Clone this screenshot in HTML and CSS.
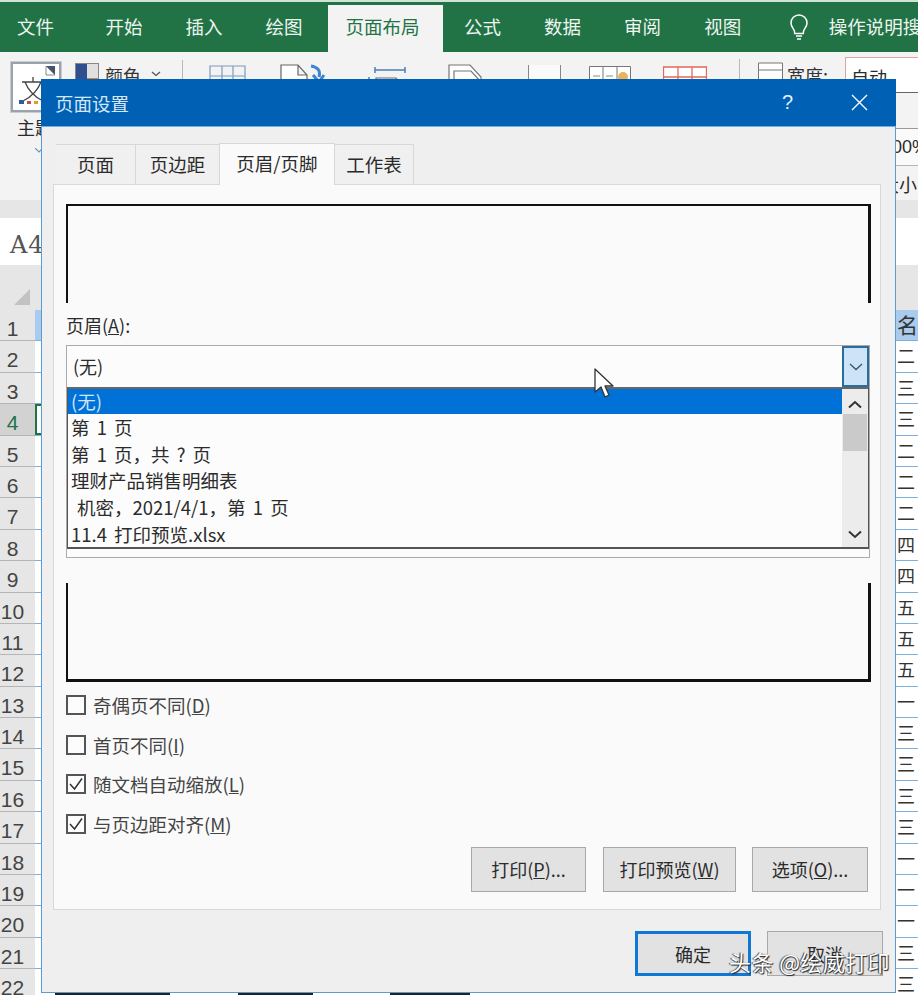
FILE: index.html
```html
<!DOCTYPE html>
<html lang="zh-CN">
<head>
<meta charset="utf-8">
<title>页面设置</title>
<link rel="stylesheet" href="styles.css">
</head>
<body>
<div class="app">
  <nav class="tabs">
    <span class="tab tab-file">文件</span>
    <span class="tab">开始</span>
    <span class="tab">插入</span>
    <span class="tab">绘图</span>
    <span class="tab tab-active">页面布局</span>
    <span class="tab">公式</span>
    <span class="tab">数据</span>
    <span class="tab">审阅</span>
    <span class="tab">视图</span>
    <svg class="bulb" width="20" height="28" viewBox="0 0 20 28"><path d="M10 2a8 8 0 0 0-8 8c0 3.500 2.200 5 3.200 7.500.4 1 .5 2 .5 3h8.600c0-1 .1-2 .5-3C15.800 15 18 13.500 18 10a8 8 0 0 0-8-8zM7 23h6M8 26h4" fill="none" stroke="#fff" stroke-width="1.500"/></svg>
    <span class="tell">操作说明搜索</span>
  </nav>

  <section class="toolbar">
    <div class="tb-row">
      <div class="theme-btn">
        <svg width="44" height="44" viewBox="0 0 44 44"><path d="M33 2l9 9v-9z" fill="#44566f"/><path d="M33 2l9 9h-9z" fill="#fff" stroke="#888"/><path d="M9 18h22M20 13v5M12 18c3 8 8 14 18 19M28 18c-3 8-8 14-18 19" fill="none" stroke="#444" stroke-width="1.300"/><rect x="6" y="36" width="5" height="4" fill="#2b5c9e"/><rect x="14" y="37" width="4" height="3" fill="#c0504d"/><rect x="21" y="37" width="4" height="3" fill="#e39c2a"/><rect x="28" y="37" width="4" height="3" fill="#555"/></svg>
      </div>
      <svg class="swatch" width="24" height="28" viewBox="0 0 24 28"><rect x=".5" y=".5" width="23" height="27" fill="#fff" stroke="#888"/><rect x="1" y="1" width="11" height="26" fill="#2f4f8f"/><rect x="12" y="1" width="11" height="14" fill="#e0e0e0"/><rect x="12" y="15" width="11" height="12" fill="#ed7d31"/></svg>
      <span class="tb-label">颜色</span>
      <svg class="caret" width="10" height="6" viewBox="0 0 10 6"><path d="M1 1l4 3.500L9 1" fill="none" stroke="#555" stroke-width="1.300"/></svg>
      <span class="sep sep-a"></span>
      <svg class="ic ic-table" width="38" height="30" viewBox="0 0 38 30"><path d="M1 30V1h35v29M1 11h35M13 1v29M24 1v29" fill="none" stroke="#7d9cc0" stroke-width="1.200"/></svg>
      <svg class="ic ic-page" width="46" height="30" viewBox="0 0 46 30"><path d="M1 30V1h17l9 10v19M18 1v10h9" fill="#fff" stroke="#666" stroke-width="1.200"/><path d="M31 2c6 1 10 4 8 11M33 11l6 7 5-7" fill="none" stroke="#3f84cc" stroke-width="3"/></svg>
      <svg class="ic ic-margin" width="38" height="30" viewBox="0 0 38 30"><path d="M7 5h30M7 2v6M37 2v6M1 12v18" fill="none" stroke="#4e80b5" stroke-width="1.500"/><path d="M8 30V13h20l7 8v9" fill="#fff" stroke="#666" stroke-width="1.200"/></svg>
      <svg class="ic ic-page2" width="34" height="30" viewBox="0 0 34 30"><path d="M1 30V1h21l11 12v17M6 30V7h17l10 11" fill="#fff" stroke="#777" stroke-width="1.200"/></svg>
      <span class="blank-box"></span>
      <svg class="ic ic-bg" width="42" height="30" viewBox="0 0 42 30"><path d="M.5 30V.5h41V30M14 .5V30M28 .5V30" fill="#fff" stroke="#777"/><path d="M4 10h7M17 10h7" stroke="#888"/><circle cx="34" cy="11" r="5" fill="#eab35a"/></svg>
      <svg class="ic ic-red" width="44" height="30" viewBox="0 0 44 30"><path d="M.5 30V1h43v29M.500 11h43M15 1v29M29 1v29" fill="#fff" stroke="#e0685a" stroke-width="1.300"/></svg>
      <span class="sep sep-b"></span>
      <svg class="ic ic-width" width="25" height="30" viewBox="0 0 25 30"><path d="M.5 1h24v28H.5zM.5 8h24" fill="#fff" stroke="#777"/></svg>
      <span class="tb-label tb-width">宽度:</span>
      <span class="auto-box">自动</span>
    </div>
    <div class="tb-side">
      <span class="side-cell side-pct">00%</span>
      <span class="side-cell side-size">大小</span>
    </div>
    <span class="theme-label">主题</span>
    <svg class="theme-caret" width="8" height="5" viewBox="0 0 8 5"><path d="M0 0l4 4 4-4" fill="none" stroke="#6f93b5" stroke-width="1.200"/></svg>
  </section>

  <div class="band"></div>
  <div class="formula"><span class="cellref">A4</span></div>
  <div class="colhead"><span class="corner"></span></div>

  <div class="rows">
    <div class="row"><span class="rh">1</span><span class="rc rc-blue"></span><span class="rv rv-blue">名</span></div>
    <div class="row"><span class="rh">2</span><span class="rc"></span><span class="rv">二</span></div>
    <div class="row"><span class="rh">3</span><span class="rc"></span><span class="rv">三</span></div>
    <div class="row row-sel"><span class="rh">4</span><span class="rc"></span><span class="rv">三</span></div>
    <div class="row"><span class="rh">5</span><span class="rc"></span><span class="rv">二</span></div>
    <div class="row"><span class="rh">6</span><span class="rc"></span><span class="rv">二</span></div>
    <div class="row"><span class="rh">7</span><span class="rc"></span><span class="rv">二</span></div>
    <div class="row"><span class="rh">8</span><span class="rc"></span><span class="rv">四</span></div>
    <div class="row"><span class="rh">9</span><span class="rc"></span><span class="rv">四</span></div>
    <div class="row"><span class="rh">10</span><span class="rc"></span><span class="rv">五</span></div>
    <div class="row"><span class="rh">11</span><span class="rc"></span><span class="rv">五</span></div>
    <div class="row"><span class="rh">12</span><span class="rc"></span><span class="rv">五</span></div>
    <div class="row"><span class="rh">13</span><span class="rc"></span><span class="rv">一</span></div>
    <div class="row"><span class="rh">14</span><span class="rc"></span><span class="rv">三</span></div>
    <div class="row"><span class="rh">15</span><span class="rc"></span><span class="rv">三</span></div>
    <div class="row"><span class="rh">16</span><span class="rc"></span><span class="rv">三</span></div>
    <div class="row"><span class="rh">17</span><span class="rc"></span><span class="rv">三</span></div>
    <div class="row"><span class="rh">18</span><span class="rc"></span><span class="rv">一</span></div>
    <div class="row"><span class="rh">19</span><span class="rc"></span><span class="rv">一</span></div>
    <div class="row"><span class="rh">20</span><span class="rc"></span><span class="rv">一</span></div>
    <div class="row"><span class="rh">21</span><span class="rc"></span><span class="rv">三</span></div>
    <div class="row"><span class="rh">22</span><span class="rc"></span><span class="rv">三</span></div>
  </div>
</div>

<div class="peek"><span class="peek-a"></span><span class="peek-b"></span><span class="peek-c"></span></div>

<div class="dialog">
  <header class="d-title">
    <span class="d-name">页面设置</span>
    <span class="d-help">?</span>
    <svg class="d-close" width="17" height="17" viewBox="0 0 17 17"><path d="M1 1l15 15M16 1L1 16" stroke="#fff" stroke-width="1.400" fill="none"/></svg>
  </header>
  <div class="d-tabs">
    <span class="d-tab d-tab1">页面</span>
    <span class="d-tab d-tab2">页边距</span>
    <span class="d-tab d-tab3">页眉/页脚</span>
    <span class="d-tab d-tab4">工作表</span>
  </div>
  <div class="panel">
    <div class="preview preview-top"></div>
    <label class="field-label">页眉(<u>A</u>):</label>
    <div class="combo">
      <span class="combo-val">(无)</span>
      <span class="combo-btn"><svg width="14" height="8" viewBox="0 0 14 8"><path d="M1 1l6 5.500L13 1" fill="none" stroke="#33566f" stroke-width="1.300"/></svg></span>
      <div class="dropdown">
        <ul class="list">
          <li class="sel">(无)</li>
          <li>第 1 页</li>
          <li>第 1 页，共 ? 页</li>
          <li>理财产品销售明细表</li>
          <li class="ind">机密，2021/4/1，第 1 页</li>
          <li>11.4 打印预览.xlsx</li>
        </ul>
        <div class="scroll">
          <svg class="sc-up" width="14" height="9" viewBox="0 0 14 9"><path d="M1 7.500l6-5.500 6 5.500" fill="none" stroke="#333" stroke-width="2"/></svg>
          <span class="thumb"></span>
          <svg class="sc-down" width="14" height="9" viewBox="0 0 14 9"><path d="M1 1.500L7 7l6-5.500" fill="none" stroke="#333" stroke-width="2"/></svg>
        </div>
      </div>
    </div>
    <div class="preview preview-bot"></div>
    <div class="checks">
      <div class="check"><span class="box"></span><span>奇偶页不同(<u>D</u>)</span></div>
      <div class="check"><span class="box"></span><span>首页不同(<u>I</u>)</span></div>
      <div class="check"><span class="box"><svg width="16" height="14" viewBox="0 0 16 14"><path d="M2 7l4.500 5L14 1.500" fill="none" stroke="#333" stroke-width="1.500"/></svg></span><span>随文档自动缩放(<u>L</u>)</span></div>
      <div class="check"><span class="box"><svg width="16" height="14" viewBox="0 0 16 14"><path d="M2 7l4.500 5L14 1.500" fill="none" stroke="#333" stroke-width="1.500"/></svg></span><span>与页边距对齐(<u>M</u>)</span></div>
    </div>
    <div class="panel-btns">
      <span class="btn btn-print">打印(<u>P</u>)...</span>
      <span class="btn btn-prev">打印预览(<u>W</u>)</span>
      <span class="btn btn-opt">选项(<u>O</u>)...</span>
    </div>
  </div>
  <footer class="d-foot">
    <span class="btn btn-ok">确定</span>
    <span class="btn btn-cancel">取消</span>
  </footer>
</div>

<svg class="cursor" width="20" height="31" viewBox="0 0 20 31"><path d="M1 1v23l6-5 4 10 4-2-4-9h8z" fill="#fff" stroke="#333" stroke-width="1.300" stroke-linejoin="round"/></svg>
<span class="watermark">头条 @绘威打印</span>
</body>
</html>
```
FILE: styles.css
```css
* { box-sizing: border-box; }
html, body { margin: 0; padding: 0; }
body {
  width: 918px;
  height: 998px;
  overflow: hidden;
  position: relative;
  background: #fff;
  font-family: "Noto Sans CJK SC", "Liberation Sans", sans-serif;
  color: #2b2b2b;
}
.app { height: 995px; overflow: hidden; display: flex; flex-direction: column; }

/* ribbon tabs */
.tabs {
  flex: none;
  height: 52px;
  background: #217346;
  border-top: 2px solid #cfe3d6;
  display: flex;
  align-items: stretch;
  color: #eef5f0;
  font-size: 18.500px;
  padding-left: 17px;
}
.tab { padding: 0 21.500px; line-height: 48px; white-space: nowrap; }
.tab-file { padding: 0 30px 0 0; }
.tab-active {
  background: #f3f3f3;
  color: #217346;
  margin: 3px 0 0 3.500px;
  line-height: 42px;
  padding: 0 23px 0 18px;
}
.bulb { margin: 11px 0 0 26px; flex: none; }
.tell { margin-left: 20px; line-height: 48px; white-space: nowrap; }

/* ribbon body */
.toolbar {
  flex: none;
  height: 148px;
  background: #f3f3f3;
  position: relative;
  overflow: hidden;
}
.tb-row { display: flex; align-items: flex-start; height: 40px; padding: 10px 0 0 11px; }
.theme-btn {
  flex: none;
  width: 50px;
  height: 50px;
  background: #fff;
  border: 2px solid #9aa3ad;
  outline: 1px solid #c8cdd3;
}
.theme-btn svg { display: block; }
.swatch { margin: 1px 0 0 14px; flex: none; }
.tb-label { font-size: 18px; line-height: 26px; margin: 0 0 0 6px; color: #333; white-space: nowrap; }
.caret { margin: 9px 0 0 10px; flex: none; }
.sep { flex: none; width: 1px; height: 40px; background: #b8b8b8; }
.sep-a { margin-left: 21px; margin-top: -2px; }
.ic { flex: none; margin-top: 3px; }
.ic-table { margin-left: 26px; }
.ic-page { margin-left: 33px; margin-top: 2px; }
.ic-margin { margin-left: 42px; margin-top: 3px; }
.ic-page2 { margin-left: 42px; margin-top: 2px; }
.blank-box {
  flex: none;
  width: 33px;
  height: 40px;
  margin: 3px 0 0 46px;
  background: #fafafa;
  border-left: 1px solid #888;
  border-right: 1px solid #888;
}
.ic-bg { margin-left: 28px; margin-top: 4px; }
.ic-red { margin-left: 32px; margin-top: 4px; }
.sep-b { margin-left: 32px; margin-top: -3px; }
.ic-width { margin-left: 18px; margin-top: 0; }
.tb-width { margin-left: 4px; }
.auto-box {
  flex: none;
  width: 80px;
  height: 36px;
  margin: -5px 0 0 17px;
  background: #fff;
  border: 1px solid #d9a79f;
  border-bottom-color: #666;
  font-size: 18px;
  line-height: 38px;
  padding-left: 5px;
  white-space: nowrap;
}
.tb-side { position: absolute; left: 895px; top: 40px; width: 23px; }
.side-cell { display: block; height: 38px; overflow: hidden; white-space: nowrap; font-size: 18px; line-height: 36px; border-bottom: 1px solid #b5b5b5; }
.side-pct { margin-top: 36px; text-indent: -3px; font-family: "Liberation Sans", sans-serif; border-top: 1px solid #999; background: #fafafa; }
.side-size { text-indent: -14px; border: 0; }
.theme-label { position: absolute; left: 17px; top: 62px; font-size: 18px; line-height: 26px; }
.theme-caret { position: absolute; left: 35px; top: 96px; }

.band { flex: none; height: 18px; background: #e6e6e6; }
.formula { flex: none; height: 47px; background: #fff; padding-left: 10px; }
.cellref { font: 24px/54px "DejaVu Serif", serif; color: #555; letter-spacing: 1px; }
.colhead { flex: none; height: 45px; background: #e6e6e6; position: relative; }
.corner {
  display: block;
  width: 0;
  height: 16px;
  margin-left: 14px;
  border-left: 16px solid transparent;
  border-bottom: 16px solid #c2c2c2;
  position: relative;
  top: 24px;
}

/* sheet rows */
.rows { flex: 1; display: flex; flex-direction: column; }
.row {
  flex: none;
  height: 31.400px;
  display: grid;
  grid-template-columns: 35px 1fr 23px;
  border-bottom: 1px solid #7fb0dc;
}
.rh {
  background: #e6e6e6;
  text-align: center;
  padding-right: 10px;
  font: 21px/38px "Liberation Sans", sans-serif;
  color: #444;
  white-space: nowrap;
  overflow: hidden;
  box-shadow: 0 1px 0 #b5b5b5;
}
.row-sel .rh { background: #d2d2d2; color: #217346; }
.row-sel .rc { border: 2px solid #217346; border-right: 0; }
.rc-blue { background: #a9cbed; }
.rv { font-size: 18px; line-height: 28px; padding-left: 2px; color: #333; white-space: nowrap; overflow: hidden; }
.rv-blue { background: #a9cbed; font-size: 21px; }

.peek { position: absolute; left: 41px; top: 992px; width: 854px; height: 3px; display: flex; }
.peek span { display: block; height: 3px; background: #222; }
.peek-a { width: 115px; margin-left: 14px; }
.peek-b { width: 75px; margin-left: 68px; }
.peek-c { width: 80px; margin-left: 77px; }

/* dialog */
.dialog {
  position: absolute;
  left: 41px;
  top: 79px;
  width: 855px;
  height: 914px;
  background: #efefef;
  border: 1px solid #5b9bd5;
  border-top: 0;
  display: flex;
  flex-direction: column;
}
.d-title {
  flex: none;
  height: 48px;
  margin: 0 -1px;
  background: #0060b4;
  border-bottom: 1px solid #6fb0e8;
  color: #d4e8f8;
  display: flex;
  align-items: center;
  font-size: 18.500px;
  line-height: 46px;
  padding-left: 14px;
}
.d-name { flex: 1; }
.d-help { font: 20px "Liberation Sans", sans-serif; color: #e3f0fb; margin-right: 58px; }
.d-close { margin-right: 28px; }
.d-tabs {
  flex: none;
  height: 57px;
  padding: 16px 0 0 14px;
  display: flex;
  align-items: flex-end;
  font-size: 18.500px;
}
.d-tab {
  height: 40px;
  line-height: 38px;
  text-align: center;
  border: 1px solid #d8d8d8;
  border-bottom: 0;
  border-left: 0;
  background: #f0f0f0;
  white-space: nowrap;
}
.d-tab1 { width: 80px; }
.d-tab2 { width: 84px; }
.d-tab3 { width: 116px; height: 42px; line-height: 38px; background: #fafafa; position: relative; top: 1px; z-index: 1; border-left: 1px solid #d8d8d8; margin-left: -1px; }
.d-tab4 { width: 79px; }
.panel {
  flex: none;
  width: 828px;
  height: 726px;
  margin-left: 11px;
  background: #fafafa;
  border: 1px solid #d8d8d8;
  padding: 19px 0 0 12px;
  display: flex;
  flex-direction: column;
}
.preview { flex: none; width: 805px; height: 99px; border: 0 solid #111; }
.preview-top { border-top-width: 2px; border-left-width: 2px; border-right-width: 3px; }
.preview-bot { border-bottom-width: 3px; border-left-width: 2px; border-right-width: 3px; margin-top: 25px; }
.field-label { font-size: 18px; line-height: 24px; margin-top: 10px; }
.combo {
  flex: none;
  position: relative;
  width: 804px;
  height: 213px;
  margin-top: 8px;
  border: 1px solid #aaa;
  background: #fcfcfc;
}
.combo-val { display: block; font-size: 18px; line-height: 40px; padding-left: 6px; }
.combo-btn {
  position: absolute;
  right: 0;
  top: 0;
  width: 27px;
  height: 41px;
  background: #cde4f8;
  border: 2px solid #2d6a9f;
  display: flex;
  align-items: center;
  justify-content: center;
}
.dropdown {
  position: absolute;
  left: 0;
  right: 0;
  top: 41px;
  height: 162px;
  border-top: 2px solid #666;
  border-bottom: 2px solid #555;
  border-left: 1px solid #555;
  border-right: 1px solid #555;
  background: #fcfcfc;
  display: flex;
}
.list { flex: 1; margin: 0; padding: 0; list-style: none; font-size: 18.500px; word-spacing: 3px; }
.list li { height: 26.700px; line-height: 26.700px; padding-left: 3px; white-space: nowrap; }
.list .sel { background: #0071d6; color: #cfe6fa; height: 25px; line-height: 25px; }
.list .ind { padding-left: 9px; }
.scroll { flex: none; width: 26px; background: #ececec; position: relative; display: flex; flex-direction: column; align-items: center; }
.sc-up { margin-top: 11px; flex: none; }
.thumb { display: block; width: 24px; height: 37px; margin-top: 5px; background: #cacaca; flex: none; }
.sc-down { margin-top: auto; margin-bottom: 8px; flex: none; }
.checks { flex: none; display: flex; flex-direction: column; gap: 15.500px; margin-top: 11px; }
.check { display: flex; align-items: center; gap: 7px; height: 24px; font-size: 18.500px; white-space: nowrap; color: #444; }
.box { flex: none; width: 20px; height: 20px; border: 2px solid #555; background: #fcfcfc; display: flex; align-items: center; justify-content: center; }
.panel-btns { flex: none; display: flex; margin-top: 11px; padding-left: 405px; }
.btn {
  display: flex;
  align-items: center;
  justify-content: center;
  height: 45px;
  background: #e2e2e2;
  border: 1px solid #a8a8a8;
  font-size: 18px;
  white-space: nowrap;
  flex: none;
}
.btn-print { width: 115px; }
.btn-prev { width: 133px; margin-left: 17px; }
.btn-opt { width: 116px; margin-left: 16px; }
.d-foot { flex: 1; display: flex; padding: 21px 0 0 593px; }
.btn-ok { width: 116px; border: 3px solid #0f78d4; }
.btn-cancel { width: 116px; margin-left: 16px; }

.cursor { position: absolute; left: 594px; top: 368px; }
.watermark {
  position: absolute;
  left: 729px;
  top: 946px;
  font-size: 22px;
  line-height: 30px;
  letter-spacing: .4px;
  color: #fff;
  white-space: nowrap;
  text-shadow: 1px 1px 1px #222, -1px 0 1px #333;
}
```
